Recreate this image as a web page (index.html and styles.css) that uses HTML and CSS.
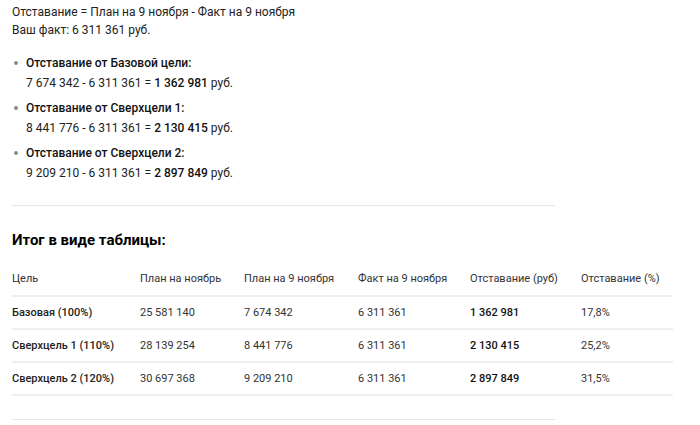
FILE: index.html
```html
<!DOCTYPE html>
<html lang="ru">
<head>
<meta charset="utf-8">
<link rel="stylesheet" href="styles.css">
</head>
<body>
<div class="page">
  <p class="line">Отставание = План на 9 ноября - Факт на 9 ноября</p>
  <p class="line">Ваш факт: 6 311 361 руб.</p>
  <ul class="list">
    <li><strong>Отставание от Базовой цели:</strong><br>7 674 342 - 6 311 361 = <strong>1 362 981</strong> руб.</li>
    <li><strong>Отставание от Сверхцели 1:</strong><br>8 441 776 - 6 311 361 = <strong>2 130 415</strong> руб.</li>
    <li><strong>Отставание от Сверхцели 2:</strong><br>9 209 210 - 6 311 361 = <strong>2 897 849</strong> руб.</li>
  </ul>
  <hr class="rule">
  <h3 class="title">Итог в виде таблицы:</h3>
  <table class="table">
    <colgroup>
      <col class="c1"><col class="c2"><col class="c3"><col class="c4"><col class="c5"><col class="c6">
    </colgroup>
    <thead>
      <tr><th>Цель</th><th>План на ноябрь</th><th>План на 9 ноября</th><th>Факт на 9 ноября</th><th>Отставание (руб)</th><th>Отставание (%)</th></tr>
    </thead>
    <tbody>
      <tr><td class="name">Базовая (100%)</td><td>25 581 140</td><td>7 674 342</td><td>6 311 361</td><td class="b">1 362 981</td><td>17,8%</td></tr>
      <tr><td class="name">Сверхцель 1 (110%)</td><td>28 139 254</td><td>8 441 776</td><td>6 311 361</td><td class="b">2 130 415</td><td>25,2%</td></tr>
      <tr><td class="name">Сверхцель 2 (120%)</td><td>30 697 368</td><td>9 209 210</td><td>6 311 361</td><td class="b">2 897 849</td><td>31,5%</td></tr>
    </tbody>
  </table>
  <hr class="rule bottom">
</div>
</body>
</html>
```
FILE: styles.css
```css
html, body { margin: 0; padding: 0; background: #fff; }
body {
  font-family: Roboto, "Noto Sans", sans-serif;
  color: #222;
  font-size: 12px;
}
.page { padding: 3px 0 0 12px; }
.line { margin: 0; line-height: 18px; }
.list { margin: 14px 0 0 0; padding: 0 0 0 14px; list-style: none; }
.list li { position: relative; line-height: 20px; margin-bottom: 5px; }
.list li::before {
  content: ""; position: absolute; left: -12px; top: 8px;
  width: 4px; height: 4px; border-radius: 50%; background: #888;
}
.list strong { font-weight: 500; color: #111; }
.rule { width: 543px; margin: 22px 0 0 0; border: 0; border-top: 1px solid #e6e6e6; }
.title { margin: 24px 0 0 0; font-size: 15px; font-weight: 700; color: #000; line-height: 20px; }
.table { margin-top: 12px; border-collapse: collapse; width: 661px; font-size: 11px; color: #333; }
.table th { text-align: left; font-weight: 400; padding: 0; height: 33px; vertical-align: middle; border-bottom: 2px solid #eee; color: #333; }
.table td { padding: 0; height: 31px; border-bottom: 2px solid #eee; }
.table td.name { font-weight: 500; color: #222; }
.table td.b { font-weight: 500; color: #111; }
.c1 { width: 128px; } .c2 { width: 104px; } .c3 { width: 114px; }
.c4 { width: 112px; } .c5 { width: 111px; } .c6 { width: 92px; }
.bottom { margin-top: 23px; }
```
